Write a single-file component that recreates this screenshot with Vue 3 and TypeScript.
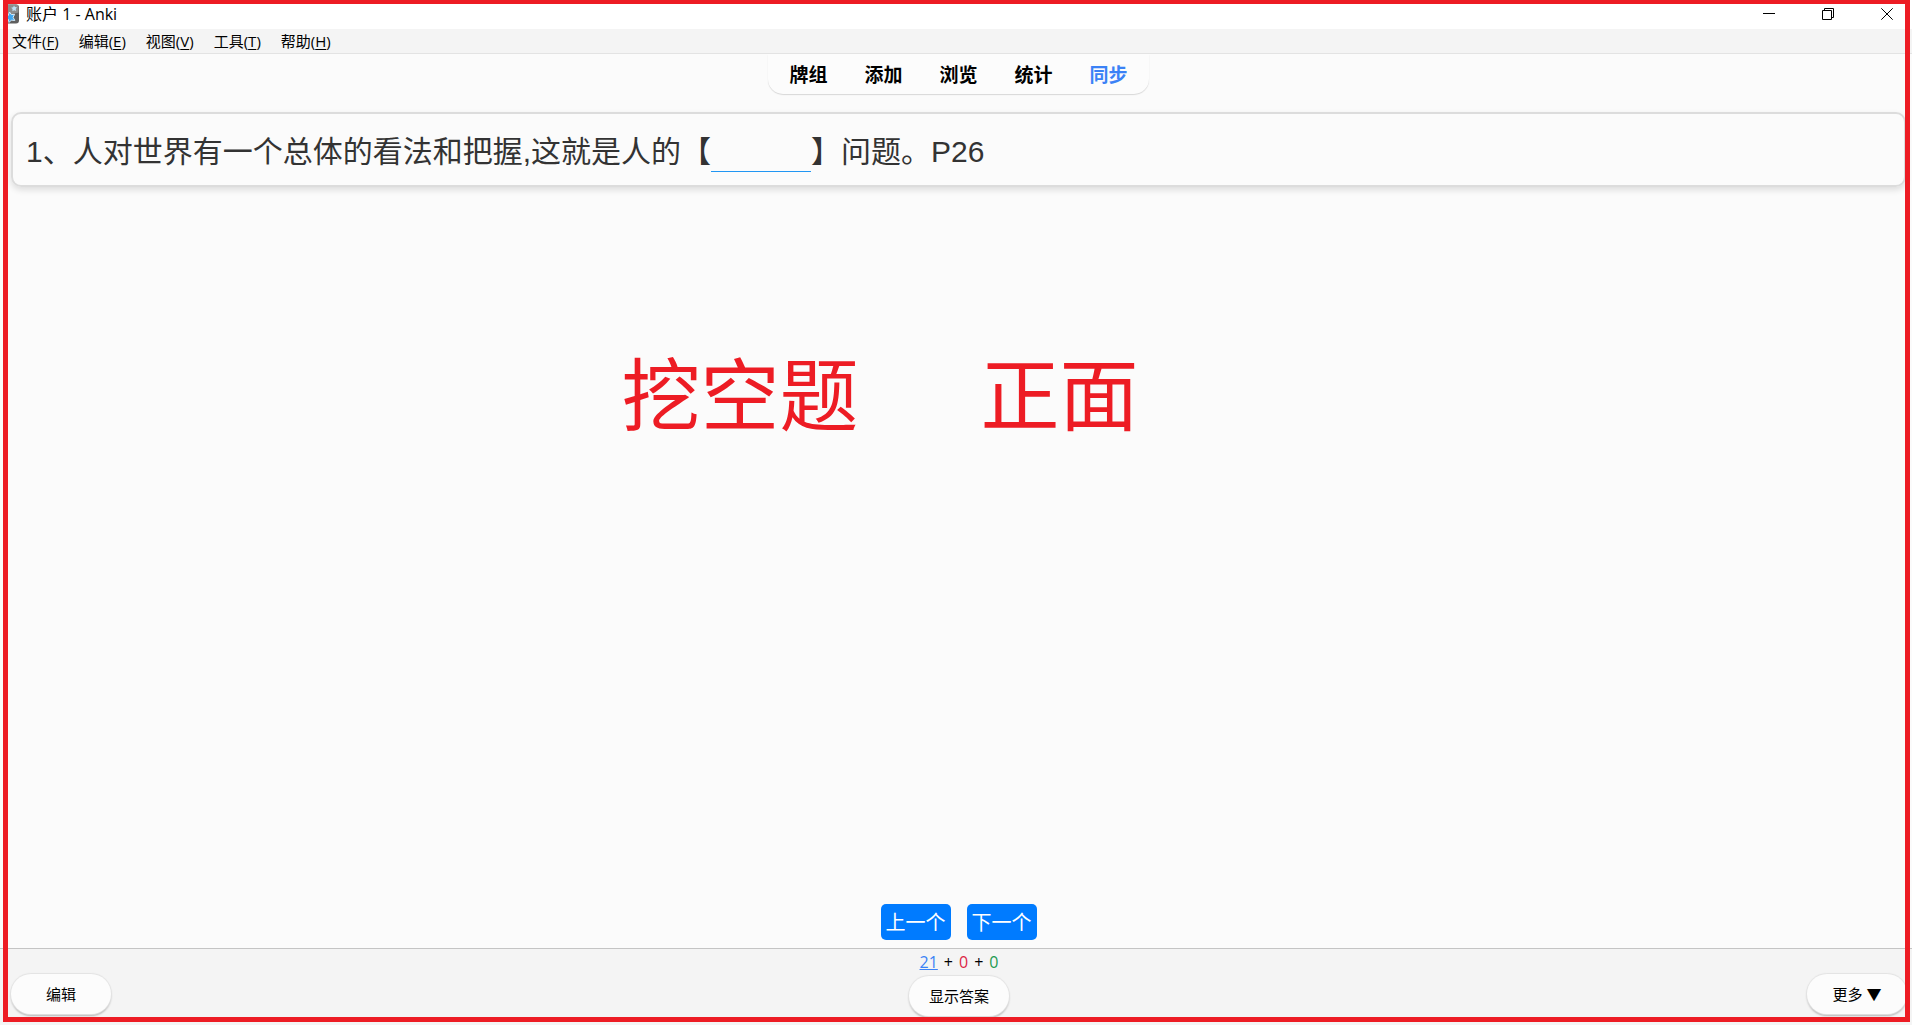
<script setup lang="ts">
interface MenuEntry {
  label: string
  key: string
}

const menus: MenuEntry[] = [
  { label: '文件', key: 'F' },
  { label: '编辑', key: 'E' },
  { label: '视图', key: 'V' },
  { label: '工具', key: 'T' },
  { label: '帮助', key: 'H' },
]

const links: string[] = ['牌组', '添加', '浏览', '统计', '同步']
const activeLink = '同步'

const counts = { fresh: 21, learning: 0, review: 0 }
</script>

<template>
  <div class="window">
    <header class="titlebar">
      <svg class="logo" width="16" height="20" viewBox="0 0 16 20" aria-hidden="true">
        <rect x="0" y="0.500" width="16" height="19" rx="3" fill="#5f5f5f" />
        <path d="M0 4q0-3.500 3-3.500h10q2.500 0 2.500 3v5L5 11 0 9z" fill="#8d8d8d" />
        <path d="M6.500 8l1.800 2.600 3.300-.3-1.500 3 1.700 3.200-3.400-.4-2.400 2.400-.8-3.400-3-1.600 2.900-1.700z" fill="#3fa6ef" stroke="#d5ecfb" stroke-width="1" />
        <path d="M11 1.500l.9 1.600 2.100.1-1.300 1.700.5 2-2-.7-1.800 1 .2-2.100-1.500-1.400 2.100-.4z" fill="#bfe0f5" />
      </svg>
      <h1 class="title">账户 1 - Anki</h1>
      <div class="controls">
        <button type="button" aria-label="最小化">
          <svg width="12" height="12" viewBox="0 0 12 12"><path d="M0 5.500h12" /></svg>
        </button>
        <button type="button" aria-label="还原">
          <svg width="12" height="12" viewBox="0 0 12 12"><path d="M.5 2.500h9v9h-9zM2.500 2.500v-2h9v9h-2" /></svg>
        </button>
        <button type="button" aria-label="关闭">
          <svg width="12" height="12" viewBox="0 0 12 12"><path d="M.3.3l11.400 11.400M11.700.3L.3 11.700" /></svg>
        </button>
      </div>
    </header>

    <nav class="menubar" aria-label="菜单">
      <button v-for="menu in menus" :key="menu.key" type="button">{{ menu.label }}(<u>{{ menu.key }}</u>)</button>
    </nav>

    <nav class="toolbar" aria-label="工具栏">
      <a v-for="link in links" :key="link" href="#" :class="{ active: link === activeLink }">{{ link }}</a>
    </nav>

    <main class="review">
      <section class="card">
        1、人对世界有一个总体的看法和把握,这就是人的【<span class="blank"></span>】问题。P26
      </section>
      <p class="note"><span>挖空题</span><span>正面</span></p>
      <div class="pager">
        <button type="button">上一个</button>
        <button type="button">下一个</button>
      </div>
    </main>

    <footer class="bottom">
      <button type="button" class="pill">编辑</button>
      <div class="answer">
        <div class="counts">
          <u class="fresh">{{ counts.fresh }}</u><span>+</span><span class="learning">{{ counts.learning }}</span><span>+</span><span class="due">{{ counts.review }}</span>
        </div>
        <button type="button" class="pill">显示答案</button>
      </div>
      <button type="button" class="pill">更多 ▼</button>
    </footer>

    <div class="frame"></div>
  </div>
</template>

<style>
body {
  margin: 0;
}
</style>

<style scoped>
.window {
  position: relative;
  display: flex;
  flex-direction: column;
  min-height: 100vh;
  overflow: hidden;
  background: #fbfbfb;
  color: #000;
  font: 15px/20px "Open Sans", "Noto Sans CJK SC", sans-serif;
}

button {
  margin: 0;
  padding: 0;
  border: 0;
  background: none;
  color: inherit;
  font: inherit;
  white-space: nowrap;
}

.titlebar {
  display: flex;
  align-items: center;
  box-sizing: border-box;
  height: 29px;
  padding: 0 19px 1px 3px;
  background: #fff;
}

.logo {
  flex: none;
}

.title {
  margin: 0 0 0 7px;
  font-size: 16px;
  font-weight: 400;
}

.controls {
  display: flex;
  gap: 47px;
  margin-left: auto;
}

.controls button {
  display: flex;
}

.controls path {
  fill: none;
  stroke: #000;
  stroke-width: 1;
}

.menubar {
  display: flex;
  gap: 20px;
  height: 24px;
  padding-left: 12px;
  border-bottom: 1px solid #e3e3e3;
  background: #f4f4f4;
}

.menubar u {
  text-underline-offset: 2px;
}

.toolbar {
  display: flex;
  align-self: center;
  gap: 37px;
  margin-left: 5px;
  padding: 7px 21px 5px;
  border-radius: 0 0 15px 15px;
  background: #fcfcfc;
  box-shadow: 0 1px 1px #d8d8d8;
  font-size: 19px;
  font-weight: 700;
  line-height: 28px;
}

.toolbar a {
  color: #000;
  text-decoration: none;
}

.toolbar .active {
  color: #3b82f6;
}

.review {
  display: flex;
  flex: 1;
  flex-direction: column;
  padding: 18px 6px 8px 11px;
}

.card {
  padding: 15px 13px 11px;
  border: 2px solid #dcdcdc;
  border-radius: 10px;
  box-shadow: 0 3px 6px rgba(0, 0, 0, 0.12);
  color: #333;
  font: 30px/45px "Liberation Sans", "Noto Sans CJK SC", sans-serif;
}

.blank {
  display: inline-block;
  width: 100px;
  height: 40px;
  border-bottom: 1px solid #2196f3;
  vertical-align: -10px;
}

.note {
  display: flex;
  gap: 122px;
  margin: 148px 0 0 32%;
  padding-left: 4px;
  color: #ed1c24;
  font-size: 79px;
  line-height: 120px;
  white-space: nowrap;
}

.pager {
  display: flex;
  justify-content: center;
  gap: 16px;
  margin-top: auto;
}

.pager button {
  width: 70px;
  height: 36px;
  padding-top: 2px;
  border-radius: 5px;
  background: #007bff;
  color: #fff;
  font-size: 20px;
}

.bottom {
  display: flex;
  justify-content: space-between;
  align-items: flex-start;
  height: 76px;
  padding: 0 5px 0 11px;
  border-top: 1px solid #c4c4c4;
  background: #f4f4f4;
}

.pill {
  width: 100px;
  height: 40px;
  margin-top: 25px;
  border-radius: 20px;
  background: #fcfcfc;
  box-shadow: 0 0 1px 1px #e3e3e3, 0 2px 2px #b0b0b0;
}

.counts {
  display: flex;
  justify-content: center;
  gap: 6px;
  margin-top: 3px;
  font-size: 16px;
}

.answer .pill {
  margin-top: 4px;
}

.fresh {
  color: #3b82f6;
}

.learning {
  color: #dc2646;
}

.due {
  color: #1d9a50;
}

.frame {
  position: absolute;
  inset: -1px 2px 3px 3px;
  border: 5px solid #ed1c24;
  pointer-events: none;
}
</style>
